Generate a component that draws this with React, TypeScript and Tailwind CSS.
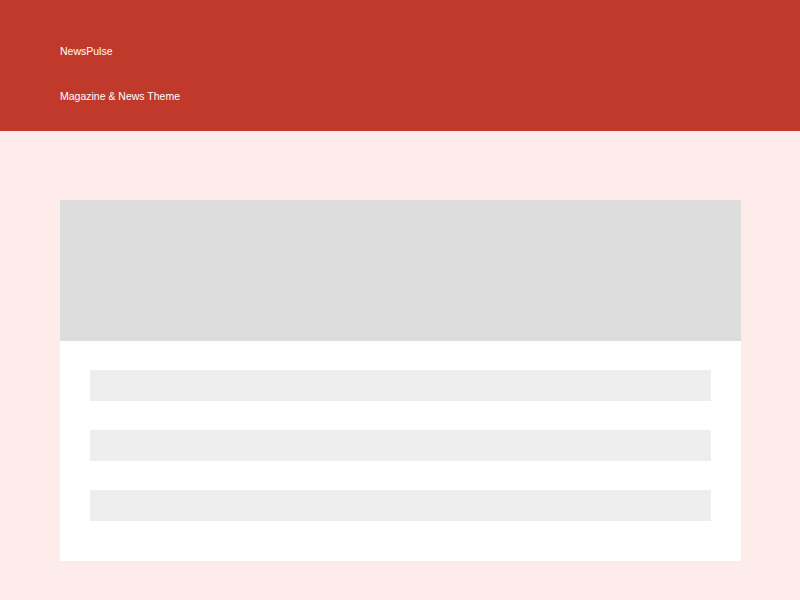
export default function App() {
  return (
    <div className="min-h-[600px] bg-[#fdecea] font-['Liberation_Sans',Arial,sans-serif]">
      {/* Masthead */}
      <header className="h-[131px] bg-[#c0392b] px-[60px] pt-[45px] text-[10.5px] leading-[13px] text-white">
        <div>NewsPulse</div>
        <div className="mt-[32px]">Magazine &amp; News Theme</div>
      </header>

      {/* Featured card placeholder */}
      <main className="px-[60px] pt-[69px]">
        <div className="w-[681px] bg-white">
          <div className="h-[141px] bg-[#dddddd]" />
          <div className="flex flex-col gap-[29px] px-[30px] pt-[29px] pb-[40px]">
            <div className="h-[31px] bg-[#eeeeee]" />
            <div className="h-[31px] bg-[#eeeeee]" />
            <div className="h-[31px] bg-[#eeeeee]" />
          </div>
        </div>
      </main>
    </div>
  );
}
